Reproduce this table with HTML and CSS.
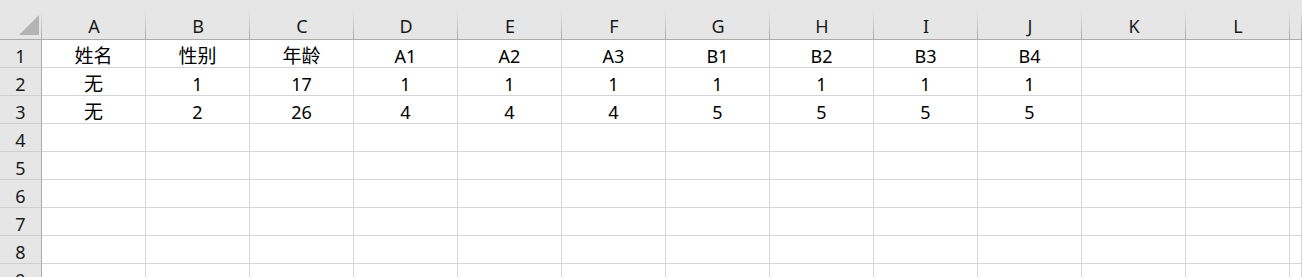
FILE: index.html
```html
<!DOCTYPE html>
<html lang="zh-CN">
<head>
<meta charset="utf-8">
<title>Sheet1</title>
<link rel="stylesheet" href="styles.css">
</head>
<body>
<div class="sheet">
  <div class="corner"><span class="corner-mark"></span></div>
  <div class="col-head">A</div>
  <div class="col-head">B</div>
  <div class="col-head">C</div>
  <div class="col-head">D</div>
  <div class="col-head">E</div>
  <div class="col-head">F</div>
  <div class="col-head">G</div>
  <div class="col-head">H</div>
  <div class="col-head">I</div>
  <div class="col-head">J</div>
  <div class="col-head">K</div>
  <div class="col-head">L</div>
  <div class="col-head"></div>

  <div class="row-head">1</div>
  <div class="cell zh">姓名</div>
  <div class="cell zh">性别</div>
  <div class="cell zh">年龄</div>
  <div class="cell">A1</div>
  <div class="cell">A2</div>
  <div class="cell">A3</div>
  <div class="cell">B1</div>
  <div class="cell">B2</div>
  <div class="cell">B3</div>
  <div class="cell">B4</div>
  <div class="cell"></div>
  <div class="cell"></div>
  <div class="cell"></div>

  <div class="row-head">2</div>
  <div class="cell zh">无</div>
  <div class="cell">1</div>
  <div class="cell">17</div>
  <div class="cell">1</div>
  <div class="cell">1</div>
  <div class="cell">1</div>
  <div class="cell">1</div>
  <div class="cell">1</div>
  <div class="cell">1</div>
  <div class="cell">1</div>
  <div class="cell"></div>
  <div class="cell"></div>
  <div class="cell"></div>

  <div class="row-head">3</div>
  <div class="cell zh">无</div>
  <div class="cell">2</div>
  <div class="cell">26</div>
  <div class="cell">4</div>
  <div class="cell">4</div>
  <div class="cell">4</div>
  <div class="cell">5</div>
  <div class="cell">5</div>
  <div class="cell">5</div>
  <div class="cell">5</div>
  <div class="cell"></div>
  <div class="cell"></div>
  <div class="cell"></div>

  <div class="row-head">4</div>
  <div class="cell"></div><div class="cell"></div><div class="cell"></div><div class="cell"></div><div class="cell"></div><div class="cell"></div><div class="cell"></div><div class="cell"></div><div class="cell"></div><div class="cell"></div><div class="cell"></div><div class="cell"></div><div class="cell"></div>
  <div class="row-head">5</div>
  <div class="cell"></div><div class="cell"></div><div class="cell"></div><div class="cell"></div><div class="cell"></div><div class="cell"></div><div class="cell"></div><div class="cell"></div><div class="cell"></div><div class="cell"></div><div class="cell"></div><div class="cell"></div><div class="cell"></div>
  <div class="row-head">6</div>
  <div class="cell"></div><div class="cell"></div><div class="cell"></div><div class="cell"></div><div class="cell"></div><div class="cell"></div><div class="cell"></div><div class="cell"></div><div class="cell"></div><div class="cell"></div><div class="cell"></div><div class="cell"></div><div class="cell"></div>
  <div class="row-head">7</div>
  <div class="cell"></div><div class="cell"></div><div class="cell"></div><div class="cell"></div><div class="cell"></div><div class="cell"></div><div class="cell"></div><div class="cell"></div><div class="cell"></div><div class="cell"></div><div class="cell"></div><div class="cell"></div><div class="cell"></div>
  <div class="row-head">8</div>
  <div class="cell"></div><div class="cell"></div><div class="cell"></div><div class="cell"></div><div class="cell"></div><div class="cell"></div><div class="cell"></div><div class="cell"></div><div class="cell"></div><div class="cell"></div><div class="cell"></div><div class="cell"></div><div class="cell"></div>
  <div class="row-head">9</div>
  <div class="cell"></div><div class="cell"></div><div class="cell"></div><div class="cell"></div><div class="cell"></div><div class="cell"></div><div class="cell"></div><div class="cell"></div><div class="cell"></div><div class="cell"></div><div class="cell"></div><div class="cell"></div><div class="cell"></div>
</div>
</body>
</html>
```

FILE: styles.css
```css
html, body {
  margin: 0;
  padding: 0;
  background: #ffffff;
  overflow: hidden;
}

.sheet {
  display: grid;
  grid-template-columns: 42px repeat(12, 104px) 1fr;
  grid-template-rows: 40px repeat(9, 28px);
  font-family: "Noto Sans", "Noto Sans CJK SC", sans-serif;
  font-size: 18px;
  color: #000000;
  width: 1302px;
}

/* top-left select-all box, with the short divider on its right edge */
.corner {
  box-sizing: border-box;
  border-bottom: 1px solid #ababab;
  background-color: #e6e6e6;
  background-image: linear-gradient(to bottom, #e6e6e6, #a8a8a8);
  background-size: 1px 28px;
  background-position: right 12px;
  background-repeat: no-repeat;
  display: flex;
  align-items: flex-end;
  justify-content: flex-end;
  padding: 0 3px 4px 0;
}

.corner-mark {
  width: 20px;
  height: 20px;
  background: #b4b4b4;
  clip-path: polygon(100% 0, 100% 100%, 0 100%);
}

/* column letters */
.col-head {
  box-sizing: border-box;
  border-bottom: 1px solid #ababab;
  background-color: #e6e6e6;
  background-image: linear-gradient(to bottom, #e2e2e2, #a9a9a9);
  background-size: 1px 27px;
  background-position: right 12px;
  background-repeat: no-repeat;
  display: flex;
  align-items: flex-end;
  justify-content: center;
  line-height: 20px;
  padding-bottom: 3px;
  color: #1a1a1a;
}

/* row numbers */
.row-head {
  box-sizing: border-box;
  background: #e6e6e6;
  border-right: 1px solid #ababab;
  border-bottom: 1px solid #d0d0d0;
  display: flex;
  align-items: flex-end;
  justify-content: center;
  line-height: 20px;
  padding-bottom: 1px;
  color: #1a1a1a;
}

.cell {
  box-sizing: border-box;
  border-right: 1px solid #d4d4d4;
  border-bottom: 1px solid #d4d4d4;
  display: flex;
  align-items: flex-end;
  justify-content: center;
  line-height: 20px;
  padding-bottom: 1px;
  white-space: nowrap;
}

.zh {
  font-family: "Noto Sans CJK SC", sans-serif;
  font-size: 19px;
  padding-bottom: 2px;
}
```
